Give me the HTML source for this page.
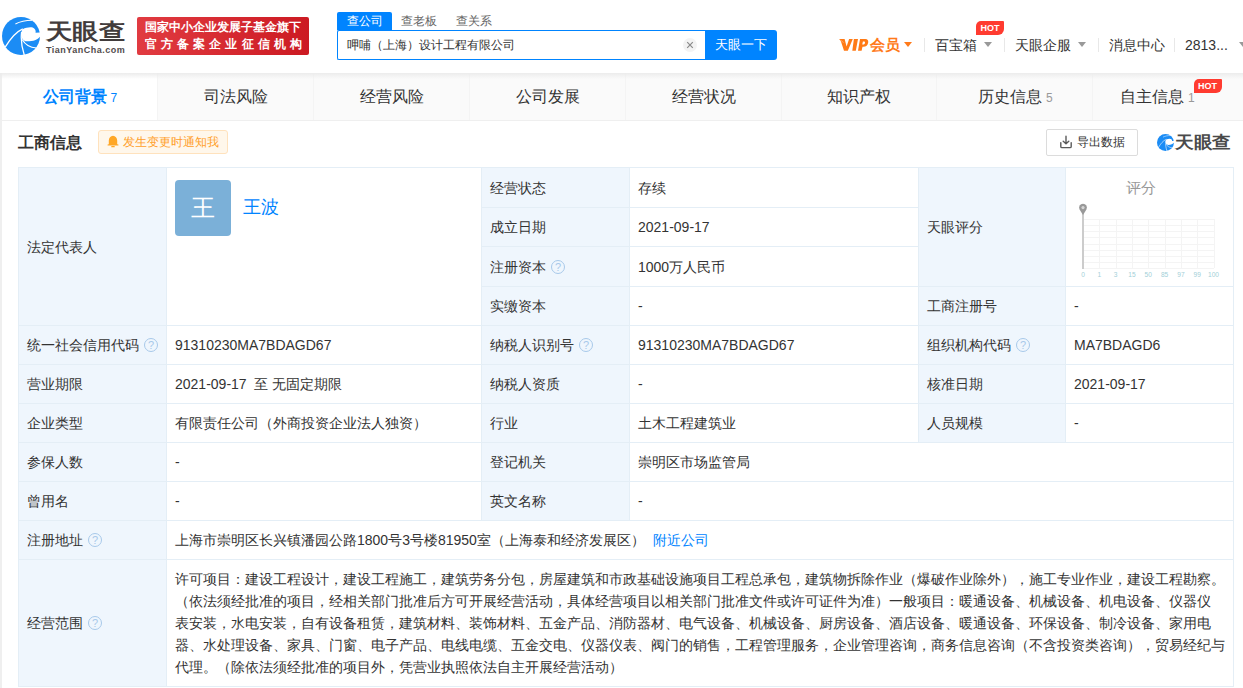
<!DOCTYPE html>
<html><head><meta charset="utf-8">
<style>
*{margin:0;padding:0;box-sizing:border-box}
html,body{text-spacing-trim:space-all;width:1243px;height:688px;overflow:hidden;background:#fff;font-family:"Liberation Sans",sans-serif;color:#333;font-size:14px}
.a{position:absolute;white-space:nowrap}
/* header */
#hdr{position:absolute;left:0;top:0;width:1243px;height:73px;background:#fff}
.logo-c{position:absolute;left:2px;top:17px;width:38px;height:38px}
.logo-t{position:absolute;left:46px;top:16px;font-size:22px;font-weight:bold;color:#423c3c;line-height:32px;transform:scaleX(1.2);transform-origin:0 0}
.logo-s{position:absolute;left:46px;top:45px;font-size:9px;font-weight:bold;color:#514b4b;letter-spacing:0.5px;line-height:10px}
.redb{position:absolute;left:137px;top:17px;width:172px;height:38px;border-radius:2px;background:linear-gradient(90deg,#e13b41,#cc1a22);color:#fff;font-weight:bold;font-size:12px}
.redb div{position:absolute;left:8px;white-space:nowrap;line-height:14px}
.stab{position:absolute;top:12px;height:18px;font-size:12px;line-height:18px;color:#666}
.stab.on{background:#0084ff;color:#fff;border-radius:2px 2px 0 0;text-align:center}
.sbox{position:absolute;left:337px;top:30px;width:370px;height:30px;border:1px solid #0084ff;border-right:none;border-radius:2px 0 0 2px;background:#fff}
.sbtn{position:absolute;left:705px;top:30px;width:72px;height:30px;background:#0084ff;border-radius:0 3px 3px 0;color:#fff;font-size:13px;line-height:30px;text-align:center}
.nav{position:absolute;top:36px;font-size:14px;line-height:18px;color:#333}
.tri{position:absolute;width:0;height:0;border-left:4px solid transparent;border-right:4px solid transparent;border-top:5px solid #999}
.sep{position:absolute;top:38px;width:1px;height:14px;background:#e8e8e8}
.hot{position:absolute;height:14px;background:#ff3b30;color:#fff;font-size:9px;font-weight:bold;line-height:14px;text-align:center;border-radius:5px 1px 6px 0}
/* tabs */
#tabs{position:absolute;left:2px;top:73px;width:1241px;height:48px;background:#fafafa;border-bottom:1px solid #efefef}
.shadow{position:absolute;left:0;top:73px;width:1243px;height:6px;background:linear-gradient(#ececec,rgba(250,250,250,0))}
.tab{position:absolute;top:0;height:47px;font-size:16px;line-height:47px;text-align:center;color:#333;border-left:1px solid #f4f4f4}
.tab .n{font-size:12px;color:#999;margin-left:4px}
.tab.on{background:#fff;color:#0084ff;font-weight:bold;border-left:none}
.tab.on .n{color:#0084ff;font-weight:normal}
/* table */
.c{position:absolute;border:1px solid #e4eef6;background:#fff;font-size:14px;line-height:20px;padding-left:8px;display:flex;align-items:center;white-space:nowrap}
.l{background:#eff6fd}
.q{display:inline-block;width:14px;height:14px;border:1px solid #a8c9ea;border-radius:50%;color:#a8c9ea;font-size:11px;line-height:12px;text-align:center;margin-left:5px;vertical-align:middle;position:relative;top:0px}
</style></head><body>
<div id="hdr">
  <svg class="logo-c" viewBox="0 0 38 38">
    <circle cx="19" cy="19" r="19" fill="#1b8cf5"/>
    <path d="M20.6 12.2 C25 10.2 30.5 9.6 32.2 11.6 C33.6 13 33.9 14.4 33.5 15.8 L40 15.2 L40 16.4 C38.2 21 33 24.8 23.5 24.3 C20.5 23 19.3 20.5 19.3 18.5 C19.3 15.5 19.6 13.6 20.6 12.2 Z" fill="#fff"/>
    <path d="M3.2 30.2 C8 22 13.5 15 20.8 11.8" stroke="#fff" stroke-width="1.3" fill="none"/>
    <path d="M19.6 15 C18.6 23 19.8 31 22.6 39" stroke="#fff" stroke-width="1.3" fill="none"/>
    <path d="M20.2 22.5 C23 27.5 28 30.5 34.5 31" stroke="#fff" stroke-width="1.2" fill="none"/>
    <path d="M13.4 7 C18 4.6 24 3.4 30.2 3.3" stroke="#fff" stroke-width="1.1" fill="none"/>
  </svg>
  <div class="logo-t">天眼查</div>
  <div class="logo-s">TianYanCha.com</div>
  <div class="redb"><div style="top:3px">国家中小企业发展子基金旗下</div><div style="top:20px;letter-spacing:4.1px">官方备案企业征信机构</div></div>

  <div class="stab on" style="left:337px;width:55px">查公司</div>
  <div class="stab" style="left:401px">查老板</div>
  <div class="stab" style="left:456px">查关系</div>
  <div class="sbox"><div class="a" style="left:9px;top:6px;font-size:12px;line-height:16px;color:#333">呷哺（上海）设计工程有限公司</div>
    <svg class="a" style="left:345px;top:7px" width="14" height="14" viewBox="0 0 14 14"><circle cx="7" cy="7" r="7" fill="#f3f3f3"/><path d="M4.2 4.2 L9.8 9.8 M9.8 4.2 L4.2 9.8" stroke="#8a8a8a" stroke-width="1.2"/></svg>
  </div>
  <div class="sbtn">天眼一下</div>

  <svg class="a" style="left:836px;top:34px" width="36" height="22" viewBox="0 0 36 22"><path fill="#ff7a15" d="M3 5.1 L8.6 5.1 L10.6 12.6 L13.1 5.1 L16.8 5.1 L11.8 16.8 L8 16.8 L5.2 8.2 C4.6 6.6 3.8 5.8 3 5.1 Z M17.9 5.1 L22 5.1 L19.8 16.8 L16.3 16.8 Z M24 5.1 L29.4 5.1 C31.6 5.1 32.4 6.6 32.2 8.6 C31.9 11.4 30 12.8 27.4 12.8 L26.5 12.8 L25.6 16.8 L22 16.8 Z M26.9 7.6 L26.2 10.4 L27.6 10.4 C28.6 10.4 29 9.6 29 8.8 C29 8 28.6 7.6 27.9 7.6 Z"/><path d="M4.6 6.2 L7.6 8.6" stroke="#fff" stroke-width="0.5" opacity="0.7"/></svg><div class="nav" style="left:870px;top:35px;color:#ff7a1a;font-weight:bold;font-size:15px;line-height:20px">会员</div>
  <div class="tri" style="left:904px;top:42px;border-top-color:#ff7a1a"></div>
  <div class="sep" style="left:924px"></div>
  <div class="nav" style="left:935px">百宝箱</div>
  <div class="tri" style="left:984px;top:42px"></div>
  <div class="hot" style="left:976px;top:21px;width:28px">HOT</div>
  <div class="sep" style="left:1004px"></div>
  <div class="nav" style="left:1015px">天眼企服</div>
  <div class="tri" style="left:1078px;top:42px"></div>
  <div class="sep" style="left:1098px"></div>
  <div class="nav" style="left:1109px">消息中心</div>
  <div class="sep" style="left:1174px"></div>
  <div class="nav" style="left:1185px">2813...</div>
  <div class="tri" style="left:1239px;top:42px"></div>
</div>

<div style="position:absolute;left:0;top:73px;width:2px;height:615px;background:#efefef"></div>
<div id="tabs">
<div class="tab on" style="left:0.0px;width:155.9px">公司背景<span class="n">7</span></div>
<div class="tab" style="left:154.9px;width:156.9px">司法风险</div>
<div class="tab" style="left:310.8px;width:156.9px">经营风险</div>
<div class="tab" style="left:466.7px;width:156.9px">公司发展</div>
<div class="tab" style="left:622.6px;width:156.9px">经营状况</div>
<div class="tab" style="left:778.5px;width:156.9px">知识产权</div>
<div class="tab" style="left:934.4px;width:156.9px">历史信息<span class="n">5</span></div>
<div class="tab" style="left:1090.3px;width:156.9px">自主信息<span class="n">1</span><span class="hot" style="position:relative;display:inline-block;left:-1px;top:-12px;width:28px;vertical-align:middle">HOT</span></div>
</div>
<div class="shadow"></div>

<!-- section title -->
<div class="a" style="left:18px;top:132px;font-size:16px;font-weight:bold;line-height:22px;color:#333">工商信息</div>
<div class="a" style="left:98px;top:130px;width:130px;height:24px;background:#fff7eb;border:1px solid #ffe2bd;border-radius:3px"></div>
<svg class="a" style="left:107px;top:135px" width="12" height="13" viewBox="0 0 12 13"><path d="M6 0.8 C3.6 1.2 1.8 3 1.8 5.6 L1.8 9.2 L0.6 9.6 L0.6 10.4 L11.4 10.4 L11.4 9.6 L10.2 9.2 L10.2 5.6 C10.2 3 8.4 1.2 6 0.8 Z" fill="#ffa726"/><rect x="4.2" y="11" width="3.6" height="1.3" rx="0.6" fill="#ffa726"/></svg><div class="a" style="left:123px;top:134px;font-size:12px;line-height:16px;color:#ffa02a">发生变更时通知我</div>
<div class="a" style="left:1046px;top:129px;width:92px;height:27px;border:1px solid #dcdcdc;border-radius:2px"></div>
<svg class="a" style="left:1058px;top:134px" width="16" height="16" viewBox="0 0 16 16"><path d="M8 2.2 V9.6 M5.2 7.2 L8 9.8 L10.8 7.2" stroke="#5a5a5a" stroke-width="1.4" fill="none" stroke-linecap="round" stroke-linejoin="round"/><path d="M2.8 8.8 V12.4 Q2.8 13.6 4 13.6 H12 Q13.2 13.6 13.2 12.4 V8.8" stroke="#5a5a5a" stroke-width="1.4" fill="none" stroke-linecap="round"/></svg><div class="a" style="left:1077px;top:134px;font-size:12px;line-height:16px;color:#333">导出数据</div>
<svg class="a" style="left:1157px;top:134px;width:17px;height:17px" viewBox="0 0 38 38">
    <circle cx="19" cy="19" r="19" fill="#1b8cf5"/>
    <path d="M20.6 12.2 C25 10.2 30.5 9.6 32.2 11.6 C33.6 13 33.9 14.4 33.5 15.8 L40 15.2 L40 16.4 C38.2 21 33 24.8 23.5 24.3 C20.5 23 19.3 20.5 19.3 18.5 C19.3 15.5 19.6 13.6 20.6 12.2 Z" fill="#fff"/>
    <path d="M3.2 30.2 C8 22 13.5 15 20.8 11.8" stroke="#fff" stroke-width="1.3" fill="none"/>
    <path d="M19.6 15 C18.6 23 19.8 31 22.6 39" stroke="#fff" stroke-width="1.3" fill="none"/>
    <path d="M20.2 22.5 C23 27.5 28 30.5 34.5 31" stroke="#fff" stroke-width="1.2" fill="none"/>
    <path d="M13.4 7 C18 4.6 24 3.4 30.2 3.3" stroke="#fff" stroke-width="1.1" fill="none"/>
  </svg><div class="a" style="left:1175px;top:131px;font-size:17px;font-weight:bold;line-height:24px;color:#4a4a4a;transform:scaleX(1.1);transform-origin:0 0">天眼查</div>

<div id="table">
<div class="c l" style="left:18px;top:167px;width:149px;height:159px;">法定代表人</div>
<div class="c" style="left:166px;top:167px;width:316px;height:159px;align-items:flex-start"><div class="a" style="left:8px;top:12px;width:56px;height:56px;border-radius:4px;background:#7bb0d8;color:#fff;font-size:24px;line-height:56px;text-align:center">王</div><div class="a" style="left:76px;top:27px;font-size:18px;line-height:24px;color:#0084ff">王波</div></div>
<div class="c l" style="left:481px;top:167px;width:149px;height:41px;">经营状态</div>
<div class="c" style="left:629px;top:167px;width:290px;height:41px;">存续</div>
<div class="c l" style="left:481px;top:207px;width:149px;height:40px;">成立日期</div>
<div class="c" style="left:629px;top:207px;width:290px;height:40px;">2021-09-17</div>
<div class="c l" style="left:481px;top:246px;width:149px;height:41px;">注册资本<span class="q">?</span></div>
<div class="c" style="left:629px;top:246px;width:290px;height:41px;">1000万人民币</div>
<div class="c l" style="left:481px;top:286px;width:149px;height:40px;">实缴资本</div>
<div class="c" style="left:629px;top:286px;width:290px;height:40px;">-</div>
<div class="c l" style="left:918px;top:167px;width:148px;height:120px;">天眼评分</div>
<div class="c" style="left:1065px;top:167px;width:169px;height:120px;align-items:flex-start"><svg class="a" style="left:0;top:0" width="167" height="118" viewBox="1066 168 167 118"><g stroke="#f4f4f4" stroke-width="1"><line x1="1083.5" y1="219" x2="1083.5" y2="268" /><line x1="1099.5" y1="219" x2="1099.5" y2="268" /><line x1="1116.5" y1="219" x2="1116.5" y2="268" /><line x1="1132.5" y1="219" x2="1132.5" y2="268" /><line x1="1148.5" y1="219" x2="1148.5" y2="268" /><line x1="1165.5" y1="219" x2="1165.5" y2="268" /><line x1="1181.5" y1="219" x2="1181.5" y2="268" /><line x1="1197.5" y1="219" x2="1197.5" y2="268" /><line x1="1214.5" y1="219" x2="1214.5" y2="268" /><line x1="1083" y1="219.5" x2="1214" y2="219.5" /><line x1="1083" y1="225.5" x2="1214" y2="225.5" /><line x1="1083" y1="231.5" x2="1214" y2="231.5" /><line x1="1083" y1="237.5" x2="1214" y2="237.5" /><line x1="1083" y1="244.5" x2="1214" y2="244.5" /><line x1="1083" y1="250.5" x2="1214" y2="250.5" /><line x1="1083" y1="256.5" x2="1214" y2="256.5" /><line x1="1083" y1="262.5" x2="1214" y2="262.5" /><line x1="1083" y1="268.5" x2="1214" y2="268.5" /></g><rect x="1082" y="213" width="2" height="56" fill="#cccccc"/><path d="M1083 215 L1079.6 209.5 A3.9 3.9 0 1 1 1086.4 209.5 Z" fill="#999"/><circle cx="1083" cy="207.6" r="1.6" fill="#d6d6d6"/><text x="1083.0" y="277" font-size="6.6" fill="#a3cfd8" text-anchor="middle" font-family="Liberation Sans">0</text><text x="1099.3" y="277" font-size="6.6" fill="#a3cfd8" text-anchor="middle" font-family="Liberation Sans">1</text><text x="1115.6" y="277" font-size="6.6" fill="#a3cfd8" text-anchor="middle" font-family="Liberation Sans">3</text><text x="1131.9" y="277" font-size="6.6" fill="#a3cfd8" text-anchor="middle" font-family="Liberation Sans">15</text><text x="1148.2" y="277" font-size="6.6" fill="#a3cfd8" text-anchor="middle" font-family="Liberation Sans">50</text><text x="1164.6" y="277" font-size="6.6" fill="#a3cfd8" text-anchor="middle" font-family="Liberation Sans">85</text><text x="1180.9" y="277" font-size="6.6" fill="#a3cfd8" text-anchor="middle" font-family="Liberation Sans">97</text><text x="1197.2" y="277" font-size="6.6" fill="#a3cfd8" text-anchor="middle" font-family="Liberation Sans">99</text><text x="1213.5" y="277" font-size="6.6" fill="#a3cfd8" text-anchor="middle" font-family="Liberation Sans">100</text></svg><div class="a" style="left:60px;top:10px;font-size:15px;line-height:20px;color:#999">评分</div></div>
<div class="c l" style="left:918px;top:286px;width:148px;height:40px;">工商注册号</div>
<div class="c" style="left:1065px;top:286px;width:169px;height:40px;">-</div>
<div class="c l" style="left:18px;top:325px;width:149px;height:40px;">统一社会信用代码<span class="q">?</span></div>
<div class="c" style="left:166px;top:325px;width:316px;height:40px;">91310230MA7BDAGD67</div>
<div class="c l" style="left:481px;top:325px;width:149px;height:40px;">纳税人识别号<span class="q">?</span></div>
<div class="c" style="left:629px;top:325px;width:290px;height:40px;">91310230MA7BDAGD67</div>
<div class="c l" style="left:918px;top:325px;width:148px;height:40px;">组织机构代码<span class="q">?</span></div>
<div class="c" style="left:1065px;top:325px;width:169px;height:40px;">MA7BDAGD6</div>
<div class="c l" style="left:18px;top:364px;width:149px;height:40px;">营业期限</div>
<div class="c" style="left:166px;top:364px;width:316px;height:40px;">2021-09-17&nbsp; 至 无固定期限</div>
<div class="c l" style="left:481px;top:364px;width:149px;height:40px;">纳税人资质</div>
<div class="c" style="left:629px;top:364px;width:290px;height:40px;">-</div>
<div class="c l" style="left:918px;top:364px;width:148px;height:40px;">核准日期</div>
<div class="c" style="left:1065px;top:364px;width:169px;height:40px;">2021-09-17</div>
<div class="c l" style="left:18px;top:403px;width:149px;height:40px;">企业类型</div>
<div class="c" style="left:166px;top:403px;width:316px;height:40px;">有限责任公司（外商投资企业法人独资）</div>
<div class="c l" style="left:481px;top:403px;width:149px;height:40px;">行业</div>
<div class="c" style="left:629px;top:403px;width:290px;height:40px;">土木工程建筑业</div>
<div class="c l" style="left:918px;top:403px;width:148px;height:40px;">人员规模</div>
<div class="c" style="left:1065px;top:403px;width:169px;height:40px;">-</div>
<div class="c l" style="left:18px;top:442px;width:149px;height:40px;">参保人数</div>
<div class="c" style="left:166px;top:442px;width:316px;height:40px;">-</div>
<div class="c l" style="left:481px;top:442px;width:149px;height:40px;">登记机关</div>
<div class="c" style="left:629px;top:442px;width:605px;height:40px;">崇明区市场监管局</div>
<div class="c l" style="left:18px;top:481px;width:149px;height:40px;">曾用名</div>
<div class="c" style="left:166px;top:481px;width:316px;height:40px;">-</div>
<div class="c l" style="left:481px;top:481px;width:149px;height:40px;">英文名称</div>
<div class="c" style="left:629px;top:481px;width:605px;height:40px;">-</div>
<div class="c l" style="left:18px;top:520px;width:149px;height:40px;">注册地址<span class="q">?</span></div>
<div class="c" style="left:166px;top:520px;width:1068px;height:40px;">上海市崇明区长兴镇潘园公路1800号3号楼81950室（上海泰和经济发展区）<span style="color:#0084ff;margin-left:8px">附近公司</span></div>
<div class="c l" style="left:18px;top:559px;width:149px;height:128px;">经营范围<span class="q">?</span></div>
<div class="c" style="left:166px;top:559px;width:1068px;height:128px;display:block"><div class="a sc" id="sc0" style="left:8px;top:8px;font-size:14px;line-height:22px">许可项目：建设工程设计，建设工程施工，建筑劳务分包，房屋建筑和市政基础设施项目工程总承包，建筑物拆除作业（爆破作业除外），施工专业作业，建设工程勘察。</div><div class="a sc" id="sc1" style="left:8px;top:30px;font-size:14px;line-height:22px">（依法须经批准的项目，经相关部门批准后方可开展经营活动，具体经营项目以相关部门批准文件或许可证件为准）一般项目：暖通设备、机械设备、机电设备、仪器仪</div><div class="a sc" id="sc2" style="left:8px;top:52px;font-size:14px;line-height:22px">表安装，水电安装，自有设备租赁，建筑材料、装饰材料、五金产品、消防器材、电气设备、机械设备、厨房设备、酒店设备、暖通设备、环保设备、制冷设备、家用电</div><div class="a sc" id="sc3" style="left:8px;top:74px;font-size:14px;line-height:22px">器、水处理设备、家具、门窗、电子产品、电线电缆、五金交电、仪器仪表、阀门的销售，工程管理服务，企业管理咨询，商务信息咨询（不含投资类咨询），贸易经纪与</div><div class="a sc" id="sc4" style="left:8px;top:96px;font-size:14px;line-height:22px">代理。（除依法须经批准的项目外，凭营业执照依法自主开展经营活动）</div></div>
</div><!--/table-->
</body></html>
